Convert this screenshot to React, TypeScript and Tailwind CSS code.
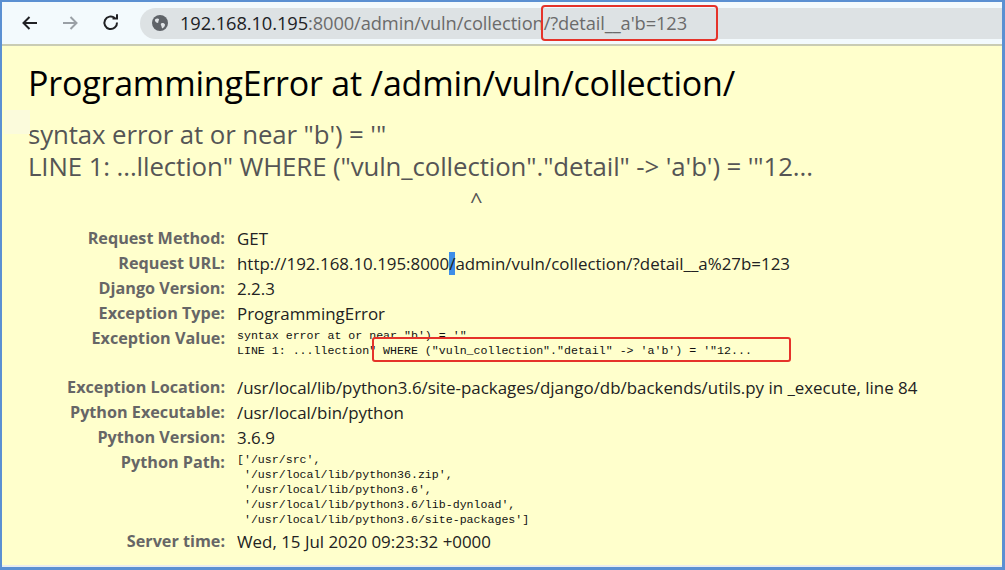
import React from "react";

const sans = { fontFamily: '"Open Sans", "Noto Sans", Arial, sans-serif' };
const mono = { fontFamily: '"Liberation Mono", "DejaVu Sans Mono", monospace' };

function Globe() {
  return (
    <svg width="18" height="18" viewBox="0 0 18 18">
      <circle cx="9" cy="9" r="8" fill="#5f6368" />
      <path d="M4 5.5 C5.5 4 7.5 4.2 8 5.2 C8.4 6.2 7 6.8 7.4 7.8 C7.8 8.8 6.2 9.4 5.4 8.6 C4.6 7.8 3.6 7 4 5.5Z" fill="#dfe3e6" />
      <path d="M10.5 9.2 C11.8 8.6 13.6 9.2 14 10.6 C14.2 12.2 12.6 14.2 11.2 14.4 C10.4 13.2 10.8 12.2 10 11.2 C9.6 10.4 9.8 9.6 10.5 9.2Z" fill="#dfe3e6" />
    </svg>
  );
}

function Row({ label, children }: { label: string; children: React.ReactNode }) {
  return (
    <>
      <div className="text-right font-bold text-[#666] text-[16.2px] pr-[12px]">{label}</div>
      <div className="text-[#222]">{children}</div>
    </>
  );
}

export default function App() {
  return (
    <div className="w-[1005px] h-[570px] bg-[#5b90d2] pl-[2px] pt-[2px] pr-[3px] pb-[3px] overflow-hidden" style={sans}>
      <div className="w-full h-full flex flex-col bg-[#ffffcc]">
        {/* toolbar */}
        <div className="h-[44px] bg-[#f3fafd] flex items-center border-b-[2px] border-[#c9ccb4] shrink-0">
          <div className="w-[56px] flex justify-center">
            <svg width="20" height="20" viewBox="0 0 20 20" fill="none" stroke="#202124" strokeWidth="2">
              <path d="M17 10H3.5M9.5 4L3.5 10L9.5 16" />
            </svg>
          </div>
          <div className="w-[24px] flex justify-center">
            <svg width="20" height="20" viewBox="0 0 20 20" fill="none" stroke="#9aa0a6" strokeWidth="2">
              <path d="M3 10H16.5M10.5 4L16.5 10L10.5 16" />
            </svg>
          </div>
          <div className="w-[58px] flex justify-center">
            <svg width="20" height="20" viewBox="0 0 20 20" fill="none" stroke="#202124" strokeWidth="2">
              <path d="M16 9.5A6.3 6.3 0 1 1 13.8 5" />
              <path d="M11.5 4.6H16V0.2" transform="translate(0 1)" />
            </svg>
          </div>
          <div className="relative flex-1 h-[31px] bg-[#dde2e4] rounded-l-full flex items-center pl-[11px]">
            <Globe />
            <div className="ml-[11px] text-[18.3px] text-[#6b6b6b] tracking-[-0.1px]">
              <span className="text-[#202124]">192.168.10.195</span>:8000/admin/vuln/collection/?detail__a'b=123
            </div>
            <div className="absolute left-[401px] top-[-3px] w-[177px] h-[36px] border-[2px] border-[#e5332a] rounded-[4px]" />
          </div>
        </div>

        {/* content */}
        <div className="relative flex-1 pl-[26px] pt-[16px]">
          <div className="absolute left-[2px] top-[64px] w-[26px] h-[24px] bg-[#fbfbdc]" />
          <h1 className="text-[34px] leading-[42px] text-black tracking-[-0.2px]">ProgrammingError at /admin/vuln/collection/</h1>
          <div className="mt-[14px] text-[25.8px] leading-[32px] text-[#555] whitespace-pre tracking-[-0.1px]">
            {`syntax error at or near "b') = '"\nLINE 1: ...llection" WHERE ("vuln_collection"."detail" -> 'a'b') = '"12...`}
          </div>
          <div className="h-[32px] pt-[4px] pl-[442px] text-[22px] leading-[28px] text-[#555]">^</div>

          <div className="mt-[12px] ml-[22px] grid grid-cols-[187px_1fr] text-[16.9px] leading-[25px]">
            <Row label="Request Method:">GET</Row>
            <Row label="Request URL:">
              http://192.168.10.195:8000<span className="bg-[#3d8ee8] text-[#222]">/</span>admin/vuln/collection/?detail__a%27b=123
            </Row>
            <Row label="Django Version:">2.2.3</Row>
            <Row label="Exception Type:">ProgrammingError</Row>
            <Row label="Exception Value:">
              <div className="relative text-[11.6px] leading-[15px] whitespace-pre pt-[2px] pb-[17px] text-[#111]" style={mono}>
                {`syntax error at or near "b') = '"\nLINE 1: ...llection" WHERE ("vuln_collection"."detail" -> 'a'b') = '"12...`}
                <div className="absolute left-[135px] top-[11px] w-[419px] h-[25px] border-[2.5px] border-[#e5332a] rounded-[3px]" />
              </div>
            </Row>
            <Row label="Exception Location:">/usr/local/lib/python3.6/site-packages/django/db/backends/utils.py in _execute, line 84</Row>
            <Row label="Python Executable:">/usr/local/bin/python</Row>
            <Row label="Python Version:">3.6.9</Row>
            <Row label="Python Path:">
              <div className="text-[11.6px] leading-[15px] whitespace-pre pt-[2px] pb-[2px] text-[#111]" style={mono}>
                {`['/usr/src',\n '/usr/local/lib/python36.zip',\n '/usr/local/lib/python3.6',\n '/usr/local/lib/python3.6/lib-dynload',\n '/usr/local/lib/python3.6/site-packages']`}
              </div>
            </Row>
            <Row label="Server time:">Wed, 15 Jul 2020 09:23:32 +0000</Row>
          </div>
        </div>
        <div className="h-[2px] bg-[#e8ecef] shrink-0" />
      </div>
    </div>
  );
}
